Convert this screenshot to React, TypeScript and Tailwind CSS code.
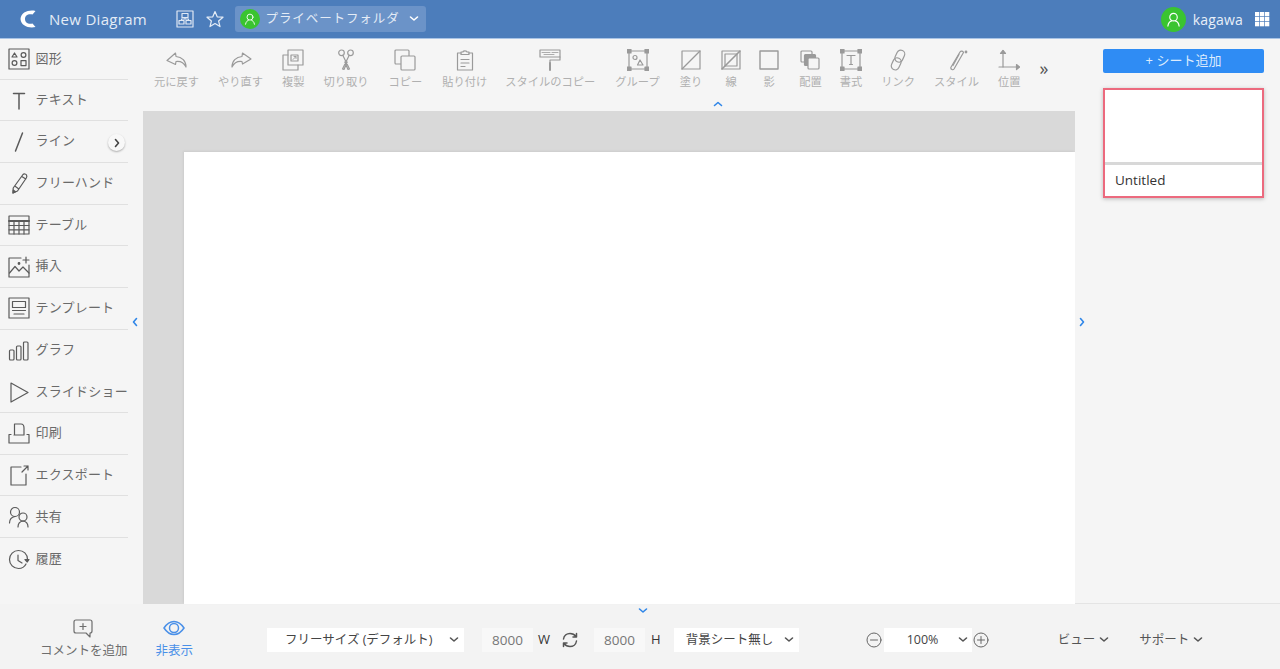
import React from "react";

const FONT = "font-['Open_Sans','Noto_Sans_CJK_JP',sans-serif]";

type IP = { children: React.ReactNode; size?: number; vb?: number; className?: string };
const Ic = ({ children, size = 22, vb = 22, className = "" }: IP) => (
  <svg width={size} height={size} viewBox={`0 0 ${vb} ${vb}`} fill="none" stroke="currentColor" strokeWidth={1.2} strokeLinecap="round" strokeLinejoin="round" className={className}>
    {children}
  </svg>
);

const Chevron = ({ className = "", dir = "down" }: { className?: string; dir?: "down" | "up" | "left" | "right" }) => {
  const d = { down: "M1.5 3 L5 6 L8.5 3", up: "M1.5 6.5 L5 3.5 L8.5 6.5", left: "M6.5 1.5 L3.5 5 L6.5 8.5", right: "M3.5 1.5 L6.5 5 L3.5 8.5" }[dir];
  return (
    <svg width="10" height="10" viewBox="0 0 10 10" fill="none" stroke="currentColor" strokeWidth={1.6} strokeLinecap="round" strokeLinejoin="round" className={className}>
      <path d={d} />
    </svg>
  );
};

const sidebar: { label: string; icon: React.ReactNode; line?: boolean }[] = [
  { label: "図形", line: true, icon: <Ic><rect x="1" y="1" width="20" height="20" /><path d="M6.5 5 L9 9 L4 9 Z" /><circle cx="15.5" cy="7" r="2.4" /><circle cx="6.5" cy="15" r="2.4" /><rect x="13" y="12.6" width="5" height="5" /></Ic> },
  { label: "テキスト", line: true, icon: <Ic><path d="M5.5 4.5 H16.5 M11 4.5 V20" strokeWidth={1.5} /></Ic> },
  { label: "ライン", line: true, icon: <Ic><path d="M14.5 2 L7.5 20" strokeWidth={1.5} /></Ic> },
  { label: "フリーハンド", line: true, icon: <Ic><path d="M15 2.5 C16 1.5 18 2 18.5 3 C19 4 19 5 18.3 6 L9.5 19 L5 21 L5.2 16 Z M13.8 4.5 L17.8 7 M6.8 14 L10.5 16.8" /><path d="M5 21 L5.2 18 L7.5 19.8 Z" fill="currentColor" /></Ic> },
  { label: "テーブル", line: true, icon: <Ic><rect x="1" y="2" width="20" height="18" /><path d="M1 7 H21" strokeWidth={2} /><path d="M1 11.5 H21 M1 15.8 H21 M6 7 V20 M11 7 V20 M16 7 V20" /></Ic> },
  { label: "挿入", line: true, icon: <Ic><path d="M13 2 H1 V21 H21 V9" /><path d="M1.5 17 L7 10.5 L11 15 L15 11 L21 17" /><circle cx="11" cy="7.5" r="0.8" fill="currentColor" /><path d="M18 1 V7 M15 4 H21" /></Ic> },
  { label: "テンプレート", line: true, icon: <Ic><rect x="1" y="1" width="20" height="20" /><rect x="4.5" y="4.5" width="13" height="6" /><path d="M4.5 13.5 H17.5 M6 17 H16" /></Ic> },
  { label: "グラフ", icon: <Ic><rect x="1.5" y="10" width="4.5" height="10" rx="1" /><rect x="8.5" y="6" width="4.5" height="14" rx="1" /><rect x="15.5" y="2" width="4.5" height="18" rx="1" /></Ic> },
  { label: "スライドショー", line: true, icon: <Ic><path d="M3 2 L20 11.5 L3 21 Z" /></Ic> },
  { label: "印刷", line: true, icon: <Ic><path d="M6.5 13 V2 H13 C15 2 16 4 16 6 V13 M1 21 V12.5 H3 M21 12.5 V21 H1 M6 13 H16 M19 12.5 H21" /></Ic> },
  { label: "エクスポート", line: true, icon: <Ic><path d="M13 3 H3 V21 H18 V10" /><path d="M14 8 L20 2 M16 2 H20 V6" /></Ic> },
  { label: "共有", line: true, icon: <Ic><circle cx="7" cy="6" r="4.5" /><path d="M1.5 17 C1.5 13 4 11 7 10.5" /><circle cx="15" cy="11" r="4" /><path d="M10 21 C10 17.5 12 15.5 15 15 C18 15.5 20 17.5 20 21" /></Ic> },
  { label: "履歴", icon: <Ic><path d="M19.5 11.5 C19.5 6 15.5 2.5 10.5 2.5 C5.5 2.5 1.5 6.5 1.5 11.5 C1.5 16.5 5.5 20.5 10.5 20.5 C14 20.5 16.5 19 18 16" /><path d="M10 7 V12.5 L14 15" /><path d="M17 11.5 L21 11.5 L19.3 14 Z" fill="currentColor" /></Ic> },
];

const tools: { label: string; icon: React.ReactNode; min?: string }[] = [
  { label: "元に戻す", icon: <Ic><path d="M9.5 4 L1 11.5 L9.5 15.5 L10 12.5 C14 12 18 14 20 18 C20 12 16 8 10 7.5 Z" /></Ic> },
  { label: "やり直す", icon: <Ic><path d="M12.5 4 L21 10 L12.5 15 L12 12.5 C8 12 4 14 2 18 C2 12 6 8 12 7.5 Z" /></Ic> },
  { label: "複製", icon: <Ic><rect x="6" y="1" width="15" height="15" /><path d="M6 6 H1 V21 H16 V16" /><rect x="9" y="6" width="7" height="6" /><path d="M11 10.5 L14 7.5 M12 7.5 H14 V9.5" strokeWidth={0.9} /></Ic> },
  { label: "切り取り", icon: <Ic><circle cx="6.5" cy="3.8" r="2.8" /><circle cx="15.5" cy="3.8" r="2.8" /><path d="M7.8 6.3 L14.5 20 L13 20.5 L9.8 13 M14.2 6.3 L7.5 20 L9 20.5 L12.2 13" /></Ic> },
  { label: "コピー", min: "ml-[1px]", icon: <Ic><rect x="1" y="1" width="14" height="14" rx="1" /><rect x="7" y="7" width="14" height="14" rx="1" fill="#f5f5f5" /></Ic> },
  { label: "貼り付け", min: "ml-[1px]", icon: <Ic><path d="M7 4 H3.5 V21 H18.5 V4 H15" /><path d="M7 5.5 V3 H9 C9 1.5 13 1.5 13 3 H15 V5.5 Z" /><path d="M7 10.5 H15 M7 14 H15 M7 17.5 H11" /></Ic> },
  { label: "スタイルのコピー", min: "-ml-[1px]", icon: <Ic><rect x="1" y="1" width="20" height="7" /><path d="M3 3.5 H11 M13 3.5 H19 M5 5.5 H15" strokeWidth={0.8} /><path d="M21 8 V11 H11 V14" /><path d="M11 14 V21" strokeWidth={2} /></Ic> },
  { label: "グループ", min: "ml-[1px]", icon: <Ic><rect x="2" y="2" width="18" height="18" /><rect x="0.5" y="0.5" width="3.5" height="3.5" fill="currentColor" /><rect x="18" y="0.5" width="3.5" height="3.5" fill="currentColor" /><rect x="0.5" y="18" width="3.5" height="3.5" fill="currentColor" /><rect x="18" y="18" width="3.5" height="3.5" fill="currentColor" /><circle cx="8" cy="8.5" r="2" /><path d="M13 11 L16 16 L10.5 16 Z" /></Ic> },
  { label: "塗り", min: "ml-[1px]", icon: <Ic size={20} vb={20}><rect x="1" y="1" width="18" height="18" /><path d="M1 19 L19 1" /></Ic> },
  { label: "線", min: "min-w-[20px]", icon: <Ic size={20} vb={20}><rect x="1" y="1" width="18" height="18" /><rect x="4" y="4" width="12" height="12" /><path d="M1 19 L19 1" strokeWidth={1.6} /></Ic> },
  { label: "影", min: "min-w-[19px] -ml-[1px] mr-[1px]", icon: <Ic size={20} vb={20}><rect x="1" y="1" width="18" height="18" strokeWidth={1.4} /></Ic> },
  { label: "配置", icon: <Ic size={20} vb={20}><rect x="1" y="1" width="11" height="11" rx="1" /><rect x="4.5" y="4.5" width="11" height="11" rx="1" fill="currentColor" /><rect x="8" y="8" width="11" height="11" rx="1" fill="#f5f5f5" /></Ic> },
  { label: "書式", min: "-ml-[1px]", icon: <Ic><rect x="2" y="2" width="18" height="18" /><rect x="0.5" y="0.5" width="3.5" height="3.5" fill="currentColor" /><rect x="18" y="0.5" width="3.5" height="3.5" fill="currentColor" /><rect x="0.5" y="18" width="3.5" height="3.5" fill="currentColor" /><rect x="18" y="18" width="3.5" height="3.5" fill="currentColor" /><path d="M7 6.5 H15 M11 6.5 V15.5 M9.5 15.5 H12.5" /></Ic> },
  { label: "リンク", icon: <Ic><g transform="rotate(25 11 11)"><rect x="7" y="0.5" width="8" height="12.5" rx="4" /><rect x="7" y="9" width="8" height="12.5" rx="4" /></g></Ic> },
  { label: "スタイル", icon: <Ic><path d="M14 3 C15 1.5 17 2 17.5 3.5 L8 20 C7 21.5 4.5 20.5 4.8 18.5 Z" /><path d="M13 5.5 L7 16.5" /><circle cx="20" cy="3" r="0.8" fill="currentColor" /></Ic> },
  { label: "位置", icon: <Ic><path d="M5 1.5 V18 H21" /><path d="M2.5 4.5 L5 1.5 L7.5 4.5 Z" fill="currentColor" /><path d="M18.5 15.5 L21.5 18 L18.5 20.5 Z" fill="currentColor" /><path d="M1 18 H5" /></Ic> },
];

const User = ({ size, icon }: { size: string; icon: number }) => (
  <span className={`${size} rounded-full bg-[#3ac430] flex items-center justify-center text-white shrink-0`}>
    <svg width={icon} height={icon} viewBox="0 0 16 16" fill="none" stroke="currentColor" strokeWidth={1.2} strokeLinecap="round">
      <circle cx="8" cy="5.5" r="4" />
      <path d="M2 15 C2.5 11.5 5 9.8 6 9.5 M14 15 C13.5 11.5 11 9.8 10 9.5" />
    </svg>
  </span>
);

const Select = ({ label, className }: { label: string; className: string }) => (
  <div className={`h-[24px] bg-white flex items-center justify-between text-[12.5px] text-[#444] ${className}`}>
    <span>{label}</span>
    <Chevron className="text-[#555]" />
  </div>
);

export default function App() {
  return (
    <div className={`${FONT} h-screen w-full flex flex-col overflow-hidden bg-[#f5f5f5]`}>
      {/* header */}
      <header className="h-[39px] shrink-0 bg-[#4c7dbb] border-b border-[#a9c4e6] flex items-center pl-[20px] pr-[10px] text-white">
        <svg width="16" height="18" viewBox="0 0 16 18" className="shrink-0">
          <path d="M15.5 1 C9 -0.5 1 2 0.5 9 C1 16 9 18.5 15.5 17 L12.5 13.5 C8 14.5 5 12.5 5 9 C5 5.5 8 3.5 12.5 4.5 Z" fill="#ffffff" />
        </svg>
        <span className="ml-[13px] text-[15px] text-[#e4ecf6] tracking-[0.3px]">New Diagram</span>
        <span className="ml-[28.5px] text-[#dfe8f4] flex">
          <Ic size={18} vb={18}><rect x="1" y="1" width="16" height="16" /><rect x="6" y="3.5" width="6" height="4" /><rect x="3" y="10.5" width="5" height="3.5" /><rect x="10" y="10.5" width="5" height="3.5" /><path d="M9 7.5 V9 H5.5 V10.5 M9 9 H12.5 V10.5" /></Ic>
        </span>
        <span className="ml-[12px] text-[#e4ecf6] flex">
          <Ic size={18} vb={18}><path d="M9 1.5 L11.2 6.8 L17 7.2 L12.6 11 L14 16.6 L9 13.6 L4 16.6 L5.4 11 L1 7.2 L6.8 6.8 Z" /></Ic>
        </span>
        <div className="ml-[11px] h-[26px] w-[191px] rounded-[3px] bg-[#6b93c8] flex items-center pl-[5px] text-[12.5px] text-[#e4ecf6]">
          <User size="w-[20px] h-[20px]" icon={12} />
          <span className="ml-[6px] tracking-[0.9px]">プライベートフォルダ</span>
          <Chevron className="ml-[9px] text-white" />
        </div>
        <div className="ml-auto flex items-center">
          <User size="w-[25px] h-[25px]" icon={15} />
          <span className="ml-[7px] text-[14px] text-[#e8eff8] tracking-[0.2px]">kagawa</span>
          <svg width="15" height="15" viewBox="0 0 15 15" fill="#ffffff" className="ml-[12px]">
            {[0, 5, 10].flatMap((y) => [0, 5, 10].map((x) => <rect key={`${x}-${y}`} x={x} y={y} width="4.3" height="4.3" />))}
          </svg>
        </div>
      </header>

      {/* body */}
      <div className="flex-1 min-h-0 flex">
        {/* left */}
        <aside className="relative w-[143px] shrink-0 bg-[#f5f5f5] pr-[15px]">
          {sidebar.map((s) => (
            <div key={s.label} className={`relative h-[41.7px] first:h-[40.6px] flex items-center ${s.line ? "border-b border-[#e0e0e0]" : ""}`}>
              <span className="w-[22px] ml-[8px] flex text-[#5a5a5a]">{s.icon}</span>
              <span className="ml-[5.5px] pb-[1px] text-[13px] text-[#6a6a6a] whitespace-nowrap tracking-[0.2px]">{s.label}</span>
              {s.label === "ライン" && (
                <span className="absolute right-[3px] top-[13px] w-[17px] h-[17px] rounded-full bg-[#f8f8f8] shadow-[0_1px_2px_rgba(0,0,0,0.3)] flex items-center justify-center text-[#444]">
                  <Chevron dir="right" />
                </span>
              )}
            </div>
          ))}
          <Chevron dir="left" className="absolute right-[3px] top-[278px] text-[#2f86e8]" />
        </aside>

        {/* center */}
        <main className="relative flex-1 min-w-0 flex flex-col">
          <div className="relative h-[72px] shrink-0 bg-[#f5f5f5] flex items-start gap-[19px] pl-[11px] pt-[10px]">
            {tools.map((t) => (
              <div key={t.label} className={`flex flex-col items-center ${t.min ?? ""}`}>
                <span className="h-[22px] flex items-center text-[#9a9a9a]">{t.icon}</span>
                <span className="mt-[2px] text-[11.25px] leading-[18px] text-[#b0b0b0] whitespace-nowrap">{t.label}</span>
              </div>
            ))}
            <span className="text-[#555] text-[18px] leading-[20px] mt-[9px]">»</span>
            <Chevron dir="up" className="absolute left-[570px] top-[60px] text-[#2f86e8]" />
          </div>
          <div className="flex-1 min-h-0 bg-[#d9d9d9] pt-[41px] pl-[41px]">
            <div className="h-full bg-white shadow-[-1px_-1px_2px_rgba(0,0,0,0.06)]" />
          </div>
          <Chevron dir="down" className="absolute left-[495px] bottom-[-12px] z-10 text-[#2f86e8]" />
        </main>

        {/* right */}
        <aside className="relative w-[205px] shrink-0 bg-[#f5f5f5] pt-[10px] pl-[28px] pr-[16px] border-b border-[#e4e4e4]">
          <button className="w-full h-[24px] rounded-[2px] bg-[#2f8cf4] text-[#dcebfd] text-[13px] pb-[1px] flex items-center justify-center">+ シート追加</button>
          <div className="mt-[15px] h-[110px] bg-white border-2 border-[#ec6a7e] shadow-[0_1px_4px_rgba(0,0,0,0.25)] flex flex-col">
            <div className="h-[75px] border-b-[3px] border-[#d8d8d8]" />
            <div className="flex-1 flex items-center pl-[10px] text-[13.5px] text-[#333]">Untitled</div>
          </div>
          <Chevron dir="right" className="absolute left-[2px] top-[278px] text-[#2f86e8]" />
        </aside>
      </div>

      {/* bottom */}
      <footer className="h-[65px] shrink-0 bg-[#f3f3f3] pt-[7px] flex items-center text-[12.5px] text-[#444]">
        <div className="ml-[40px] flex flex-col items-center text-[#6e6e6e] -mt-[3px]">
          <Ic size={22} vb={22} className="-ml-[2px]"><path d="M4 3 H18 C19.5 3 20 4 20 5 V14 C20 15.5 19.5 16 18 16 V20 L14 16 H4 C2.5 16 2 15.5 2 14 V5 C2 4 2.5 3 4 3 Z" /><path d="M11 6.5 V12.5 M8 9.5 H14" /></Ic>
          <span className="mt-[3px] text-[12.5px] leading-[18px]">コメントを追加</span>
        </div>
        <div className="ml-[28px] flex flex-col items-center text-[#4a90e8] -mt-[3px]">
          <svg width="22" height="22" viewBox="0 0 22 22" fill="none" stroke="currentColor" strokeWidth={1.5}>
            <path d="M1 11 C4 6.5 7.5 4.5 11 4.5 C14.5 4.5 18 6.5 21 11 C18 15.5 14.5 17.5 11 17.5 C7.5 17.5 4 15.5 1 11 Z" />
            <circle cx="11" cy="11" r="4.5" />
          </svg>
          <span className="mt-[3px] text-[12.5px] leading-[18px]">非表示</span>
        </div>
        <Select label="フリーサイズ (デフォルト)" className="ml-[74px] w-[197px] pl-[18px] pr-[5px]" />
        <div className="ml-[18px] w-[51px] h-[24px] bg-[#f8f8f8] flex items-center justify-center text-[13.5px] text-[#777]">8000</div>
        <span className="ml-[5px] text-[13px] text-[#333]">W</span>
        <span className="ml-[12px] flex text-[#555]">
          <Ic size={16} vb={16}><path d="M1.5 7 C2 3.5 5 1.5 8 1.5 C10.5 1.5 12.5 2.5 14 4.5 M14.5 1.5 V5 H11" strokeWidth={1.5} /><path d="M14.5 9 C14 12.5 11 14.5 8 14.5 C5.5 14.5 3.5 13.5 2 11.5 M1.5 14.5 V11 H5" strokeWidth={1.5} /></Ic>
        </span>
        <div className="ml-[16px] w-[51px] h-[24px] bg-[#f8f8f8] flex items-center justify-center text-[13.5px] text-[#777]">8000</div>
        <span className="ml-[6px] text-[13px] text-[#333]">H</span>
        <Select label="背景シート無し" className="ml-[13px] w-[125px] pl-[12px] pr-[5px]" />
        <span className="ml-[67px] flex text-[#666]">
          <Ic size={16} vb={16}><circle cx="8" cy="8" r="7" strokeWidth={1} /><path d="M4.5 8 H11.5" strokeWidth={1} /></Ic>
        </span>
        <Select label="100%" className="ml-[2px] w-[88px] pl-[23px] pr-[4px]" />
        <span className="ml-[1px] flex text-[#666]">
          <Ic size={16} vb={16}><circle cx="8" cy="8" r="7" strokeWidth={1} /><path d="M4.5 8 H11.5 M8 4.5 V11.5" strokeWidth={1} /></Ic>
        </span>
        <span className="ml-[69px] flex items-center gap-[4px] text-[#555]">ビュー<Chevron /></span>
        <span className="ml-[30px] flex items-center gap-[4px] text-[#555]">サポート<Chevron /></span>
      </footer>
    </div>
  );
}
